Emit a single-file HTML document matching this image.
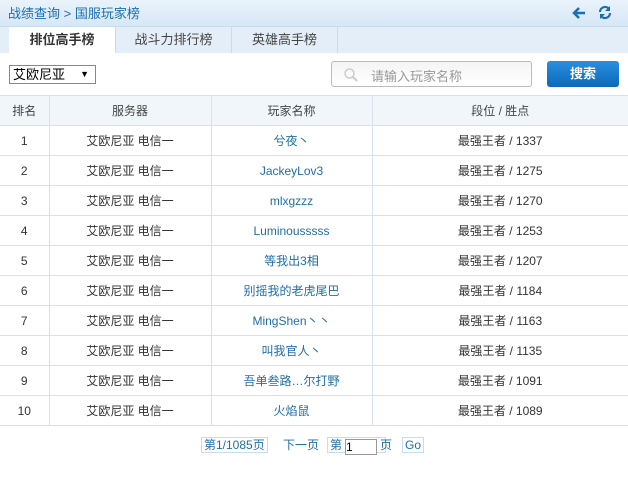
<!DOCTYPE html>
<html><head><meta charset="utf-8"><style>
*{margin:0;padding:0;box-sizing:border-box}
body{width:628px;height:483px;background:#fff;font-family:"Liberation Sans","Noto Sans CJK SC",sans-serif;font-size:12px;color:#333;position:relative;overflow:hidden}
.hd{position:absolute;left:0;top:0;width:628px;height:27px;background:linear-gradient(#eaf3fb,#d6e7f6);border-bottom:1px solid #c9dcec}
.hd .t{position:absolute;left:8px;top:3px;color:#1a6fb0;font-size:13px}
.tabs{position:absolute;left:0;top:27px;width:628px;height:26px;background:#e3eef8}
.tab{position:absolute;top:0;height:26px;line-height:26px;text-align:center;font-size:13px;color:#444;border-right:1px solid #c9dcec}
.tab.on{background:#fff;font-weight:bold;color:#333}
.sel{position:absolute;left:9px;top:65px;width:87px;height:19px;border:1px solid #888;font-size:13px;line-height:17px;padding-left:3px;color:#000;background:#fff}
.sel:after{content:"▼";position:absolute;right:6px;top:0;font-size:9px}
.srch{position:absolute;left:331px;top:61px;width:201px;height:26px;border:1px solid #bbb;border-radius:3px;background:linear-gradient(#f4f4f4,#fff)}
.srch span{position:absolute;left:39px;top:4px;color:#999;font-size:13px}
.btn{position:absolute;left:547px;top:61px;width:72px;height:26px;border-radius:3px;background:linear-gradient(#2a8ee0,#0c6ab9);color:#fff;font-weight:bold;font-size:13px;text-align:center;line-height:26px}
table{position:absolute;left:0;top:95px;width:628px;border-collapse:collapse}
td,th{height:30px;border:1px solid #d3e2ee;text-align:center;font-weight:normal;font-size:12px}
th{background:#f1f6fb;color:#444}
tr td:first-child,tr th:first-child{border-left:none}
tr td:last-child,tr th:last-child{border-right:none}
td.n{color:#1f6ea6}
.pg{position:absolute;top:437px;font-size:12px;color:#1f6ea6;line-height:16px}
.bx{border:1px solid #c9dcec;padding:0 2px;display:inline-block;height:16px;line-height:14px}
</style></head><body>
<div class="hd"><span class="t">战绩查询 &gt; 国服玩家榜</span>
<svg style="position:absolute;left:572px;top:6px" width="14" height="14"><path d="M13 7H3M7 2L2 7l5 5" stroke="#1a6fb0" stroke-width="2.5" fill="none"/></svg>
<svg style="position:absolute;left:598px;top:5px" width="14" height="15"><path d="M2 7a5 5 0 0 1 9-3M12 8a5 5 0 0 1-9 3" stroke="#1a6fb0" stroke-width="2.2" fill="none"/><path d="M12 1v5H7zM2 14V9h5z" fill="#1a6fb0"/></svg>
</div>
<div class="tabs">
<div class="tab on" style="left:9px;width:107px">排位高手榜</div>
<div class="tab" style="left:116px;width:116px">战斗力排行榜</div>
<div class="tab" style="left:232px;width:106px">英雄高手榜</div>
</div>
<div class="sel">艾欧尼亚</div>
<div class="srch"><svg style="position:absolute;left:11px;top:5px" width="16" height="16"><circle cx="6.5" cy="6.5" r="4.5" stroke="#ccc" stroke-width="1.5" fill="none"/><path d="M10 10l4 4" stroke="#ccc" stroke-width="2"/></svg><span>请输入玩家名称</span></div>
<div class="btn">搜索</div>
<table>
<tr><th style="width:49px">排名</th><th style="width:162px">服务器</th><th style="width:161px">玩家名称</th><th>段位 / 胜点</th></tr>
<tr><td>1</td><td>艾欧尼亚 电信一</td><td class="n">兮夜丶</td><td>最强王者 / 1337</td></tr>
<tr><td>2</td><td>艾欧尼亚 电信一</td><td class="n">JackeyLov3</td><td>最强王者 / 1275</td></tr>
<tr><td>3</td><td>艾欧尼亚 电信一</td><td class="n">mlxgzzz</td><td>最强王者 / 1270</td></tr>
<tr><td>4</td><td>艾欧尼亚 电信一</td><td class="n">Luminousssss</td><td>最强王者 / 1253</td></tr>
<tr><td>5</td><td>艾欧尼亚 电信一</td><td class="n">等我出3相</td><td>最强王者 / 1207</td></tr>
<tr><td>6</td><td>艾欧尼亚 电信一</td><td class="n">别摇我的老虎尾巴</td><td>最强王者 / 1184</td></tr>
<tr><td>7</td><td>艾欧尼亚 电信一</td><td class="n">MingShen丶丶</td><td>最强王者 / 1163</td></tr>
<tr><td>8</td><td>艾欧尼亚 电信一</td><td class="n">叫我官人丶</td><td>最强王者 / 1135</td></tr>
<tr><td>9</td><td>艾欧尼亚 电信一</td><td class="n">吾单叁路…尔打野</td><td>最强王者 / 1091</td></tr>
<tr><td>10</td><td>艾欧尼亚 电信一</td><td class="n">火焰鼠</td><td>最强王者 / 1089</td></tr>
</table>
<div class="pg" style="left:201px"><span class="bx">第1/1085页</span></div>
<div class="pg" style="left:283px">下一页</div>
<div class="pg" style="left:327px"><span class="bx" style="position:relative;width:59px">第<span style="position:absolute;left:17px;top:1px;width:32px;height:16px;border:1px solid #999;color:#000;background:#fff;line-height:14px">1</span><span style="position:absolute;left:52px">页</span></span></div>
<div class="pg" style="left:402px"><span class="bx">Go</span></div>
</body></html>
